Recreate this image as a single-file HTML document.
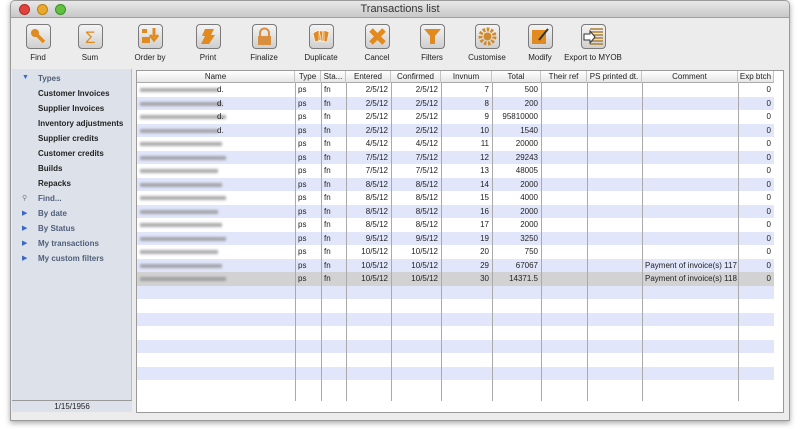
<!DOCTYPE html>
<html><head><meta charset="utf-8"><style>
*{margin:0;padding:0;box-sizing:border-box}
body{width:800px;height:429px;background:#fff;position:relative;overflow:hidden;font-family:"Liberation Sans",sans-serif;font-size:8px;color:#222}
.win{position:absolute;left:10px;top:0;width:780px;height:421px;background:#ececec;border:1px solid #9a9a9a;border-radius:5px 5px 0 0;box-shadow:0 2px 6px rgba(0,0,0,.35);overflow:hidden}
.title{position:absolute;left:0;top:0;width:100%;height:17px;background:linear-gradient(#e8e8e8,#c8c8c8);border-bottom:1px solid #a0a0a0;text-align:center;font-size:11px;line-height:17px;color:#333}
.dot{position:absolute;top:3px;width:11px;height:11px;border-radius:50%}
.tb{position:absolute;top:23px;text-align:center;width:70px;margin-left:-35px}
.ic{width:25px;height:25px;margin:0 auto;border:1px solid #7a7a7a;border-radius:4px;background:linear-gradient(#f4f4f4,#cfcfcf);position:relative}
.tb span{display:block;margin-top:4px;font-size:8px;color:#222}
.side{position:absolute;left:1px;top:68px;width:120px;height:331px;background:#dde2ea;border-right:1px solid #b8bcc4}
.si{position:absolute;left:26px;font-size:8px;font-weight:bold;color:#222}
.sh{color:#4f5e7a}
.tri{position:absolute;left:10px;font-size:7px;color:#3a66c8}
.date{position:absolute;left:1px;top:399px;width:120px;height:12px;background:#dde2ea;border-top:1px solid #999;text-align:center;font-size:8px;line-height:12px}
.tbl{position:absolute;left:125px;top:69px;width:648px;height:343px;background:#fff;border:1px solid #9a9a9a}
.hdr{position:absolute;left:0;top:0;height:12px;width:637px;background:linear-gradient(#fff,#e6e6e6);border-bottom:1px solid #aaa}
.hc{position:absolute;top:0;height:12px;line-height:12px;text-align:center;border-right:1px solid #c4c4c4;font-size:8px;white-space:nowrap;overflow:hidden}
.row{position:absolute;left:0;width:637px;height:13.5px}
.vl{position:absolute;top:12px;height:318px;border-left:1px solid #aaa}
.c{position:absolute;line-height:13.5px;font-size:8px;white-space:nowrap}
.r{text-align:right}
.blur{position:absolute;top:5px;height:4px;background:#888;filter:blur(1.2px);opacity:.7}
</style></head><body>
<div class="win">
<div class="title">Transactions list
<div class="dot" style="left:8px;background:#e0443e;border:1px solid #b02a26"></div>
<div class="dot" style="left:26px;background:#e9a92c;border:1px solid #b98218"></div>
<div class="dot" style="left:44px;background:#5fc13f;border:1px solid #3b8f28"></div>
</div>

<div class="tb" style="left:27px"><div class="ic"><svg width="23" height="23"><circle cx="8" cy="8" r="4" fill="#e08a20"/><path d="M10 10L17 17" stroke="#e08a20" stroke-width="3.5"/></svg></div><span>Find</span></div>
<div class="tb" style="left:79px"><div class="ic"><svg width="23" height="23"><text x="6" y="18" font-size="17" fill="#e08a20" font-family="Liberation Sans">Σ</text></svg></div><span>Sum</span></div>
<div class="tb" style="left:139px"><div class="ic"><svg width="23" height="23"><rect x="3" y="4" width="5" height="4" fill="#e08a20"/><rect x="3" y="12" width="8" height="6" fill="#e08a20"/><path d="M15 3v9M11 10l4 5 4-5" stroke="#e08a20" stroke-width="3" fill="none"/></svg></div><span>Order by</span></div>
<div class="tb" style="left:197px"><div class="ic"><svg width="23" height="23"><path d="M8 4h9l-3 6h4l-6 9H4l4-8H5z" fill="#e08a20"/></svg></div><span>Print</span></div>
<div class="tb" style="left:253px"><div class="ic"><svg width="23" height="23"><path d="M7 11V8a4.5 4.5 0 0 1 9 0v3" stroke="#d89040" stroke-width="2" fill="none"/><rect x="5" y="11" width="13" height="9" fill="#d89040"/></svg></div><span>Finalize</span></div>
<div class="tb" style="left:310px"><div class="ic"><svg width="23" height="23"><path d="M3 8l6-3 2 10-6 2zM9 6h5v10H9zM13 5l6 2-2 10-5-1z" fill="#e08a20" stroke="#fff" stroke-width=".6"/></svg></div><span>Duplicate</span></div>
<div class="tb" style="left:366px"><div class="ic"><svg width="23" height="23"><path d="M5 5L18 18M18 5L5 18" stroke="#e08a20" stroke-width="5"/></svg></div><span>Cancel</span></div>
<div class="tb" style="left:421px"><div class="ic"><svg width="23" height="23"><path d="M3 4h17l-6 7v8h-5v-8z" fill="#e08a20"/></svg></div><span>Filters</span></div>
<div class="tb" style="left:476px"><div class="ic"><svg width="23" height="23"><circle cx="11.5" cy="11.5" r="7" fill="none" stroke="#d08a30" stroke-width="4" stroke-dasharray="2.5 1.5"/><circle cx="11.5" cy="11.5" r="4" fill="#d08a30"/></svg></div><span>Customise</span></div>
<div class="tb" style="left:529px"><div class="ic"><svg width="23" height="23"><rect x="3" y="5" width="14" height="14" fill="#e08a20"/><path d="M10 15L19 4" stroke="#333" stroke-width="2"/></svg></div><span>Modify</span></div>
<div class="tb" style="left:582px"><div class="ic"><svg width="23" height="23"><g stroke="#b08030" stroke-width="1.5"><path d="M8 4h13M8 7h13M8 10h13M8 13h13M8 16h13M8 19h13"/></g><path d="M2 9h6V6l5 6-5 6v-3H2z" fill="#fff" stroke="#333"/></svg></div><span>Export to MYOB</span></div>

<div class="side">
<div class="tri" style="top:5px">▼</div><div class="si sh" style="top:5px">Types</div>
<div class="si" style="top:20px">Customer Invoices</div>
<div class="si" style="top:35px">Supplier Invoices</div>
<div class="si" style="top:50px">Inventory adjustments</div>
<div class="si" style="top:65px">Supplier credits</div>
<div class="si" style="top:80px">Customer credits</div>
<div class="si" style="top:95px">Builds</div>
<div class="si" style="top:110px">Repacks</div>
<div class="tri" style="top:125px;color:#777">⚲</div><div class="si sh" style="top:125px">Find...</div>
<div class="tri" style="top:140px">▶</div><div class="si sh" style="top:140px">By date</div>
<div class="tri" style="top:155px">▶</div><div class="si sh" style="top:155px">By Status</div>
<div class="tri" style="top:170px">▶</div><div class="si sh" style="top:170px">My transactions</div>
<div class="tri" style="top:185px">▶</div><div class="si sh" style="top:185px">My custom filters</div>
</div>
<div class="date">1/15/1956</div>

<div class="tbl" id="t">
<div class="hdr">
<div class="hc" style="left:0;width:158px">Name</div>
<div class="hc" style="left:158px;width:26px">Type</div>
<div class="hc" style="left:184px;width:25px">Sta...</div>
<div class="hc" style="left:209px;width:45px">Entered</div>
<div class="hc" style="left:254px;width:50px">Confirmed</div>
<div class="hc" style="left:304px;width:51px">Invnum</div>
<div class="hc" style="left:355px;width:49px">Total</div>
<div class="hc" style="left:404px;width:46px">Their ref</div>
<div class="hc" style="left:450px;width:55px">PS printed dt.</div>
<div class="hc" style="left:505px;width:96px">Comment</div>
<div class="hc" style="left:601px;width:36px">Exp btch</div>
</div>
<div id="rows"></div>
</div>
</div>
<script>
var d=[["2/5/12","7","500"],["2/5/12","8","200"],["2/5/12","9","95810000"],["2/5/12","10","1540"],["4/5/12","11","20000"],["7/5/12","12","29243"],["7/5/12","13","48005"],["8/5/12","14","2000"],["8/5/12","15","4000"],["8/5/12","16","2000"],["8/5/12","17","2000"],["9/5/12","19","3250"],["10/5/12","20","750"],["10/5/12","29","67067"],["10/5/12","30","14371.5"]];
var h="";
for(var i=0;i<23;i++){var y=12+i*13.5;var bg=i==14?"#d2d2d2":(i%2?"#e2e6fb":"#fff");h+='<div class="row" style="top:'+y+'px;background:'+bg+'">';
if(i<15){var r=d[i];h+='<div class="blur" style="left:3px;width:'+(78+(i%3)*4)+'px"></div>'+(i<4?'<div class="c" style="left:80px">d.</div>':'')+
'<div class="c" style="left:161px">ps</div><div class="c" style="left:187px">fn</div>'+
'<div class="c r" style="left:209px;width:42px">'+r[0]+'</div><div class="c r" style="left:254px;width:47px">'+r[0]+'</div>'+
'<div class="c r" style="left:304px;width:48px">'+r[1]+'</div><div class="c r" style="left:355px;width:46px">'+r[2]+'</div>'+
(i>=13?'<div class="c" style="left:508px">Payment of invoice(s) '+(i==13?117:118)+'</div>':'')+
'<div class="c r" style="left:601px;width:33px">0</div>';}
h+='</div>';}
[158,184,209,254,304,355,404,450,505,601].forEach(function(x){h+='<div class="vl" style="left:'+x+'px"></div>'});
document.getElementById("rows").innerHTML=h;
</script>
</body></html>
